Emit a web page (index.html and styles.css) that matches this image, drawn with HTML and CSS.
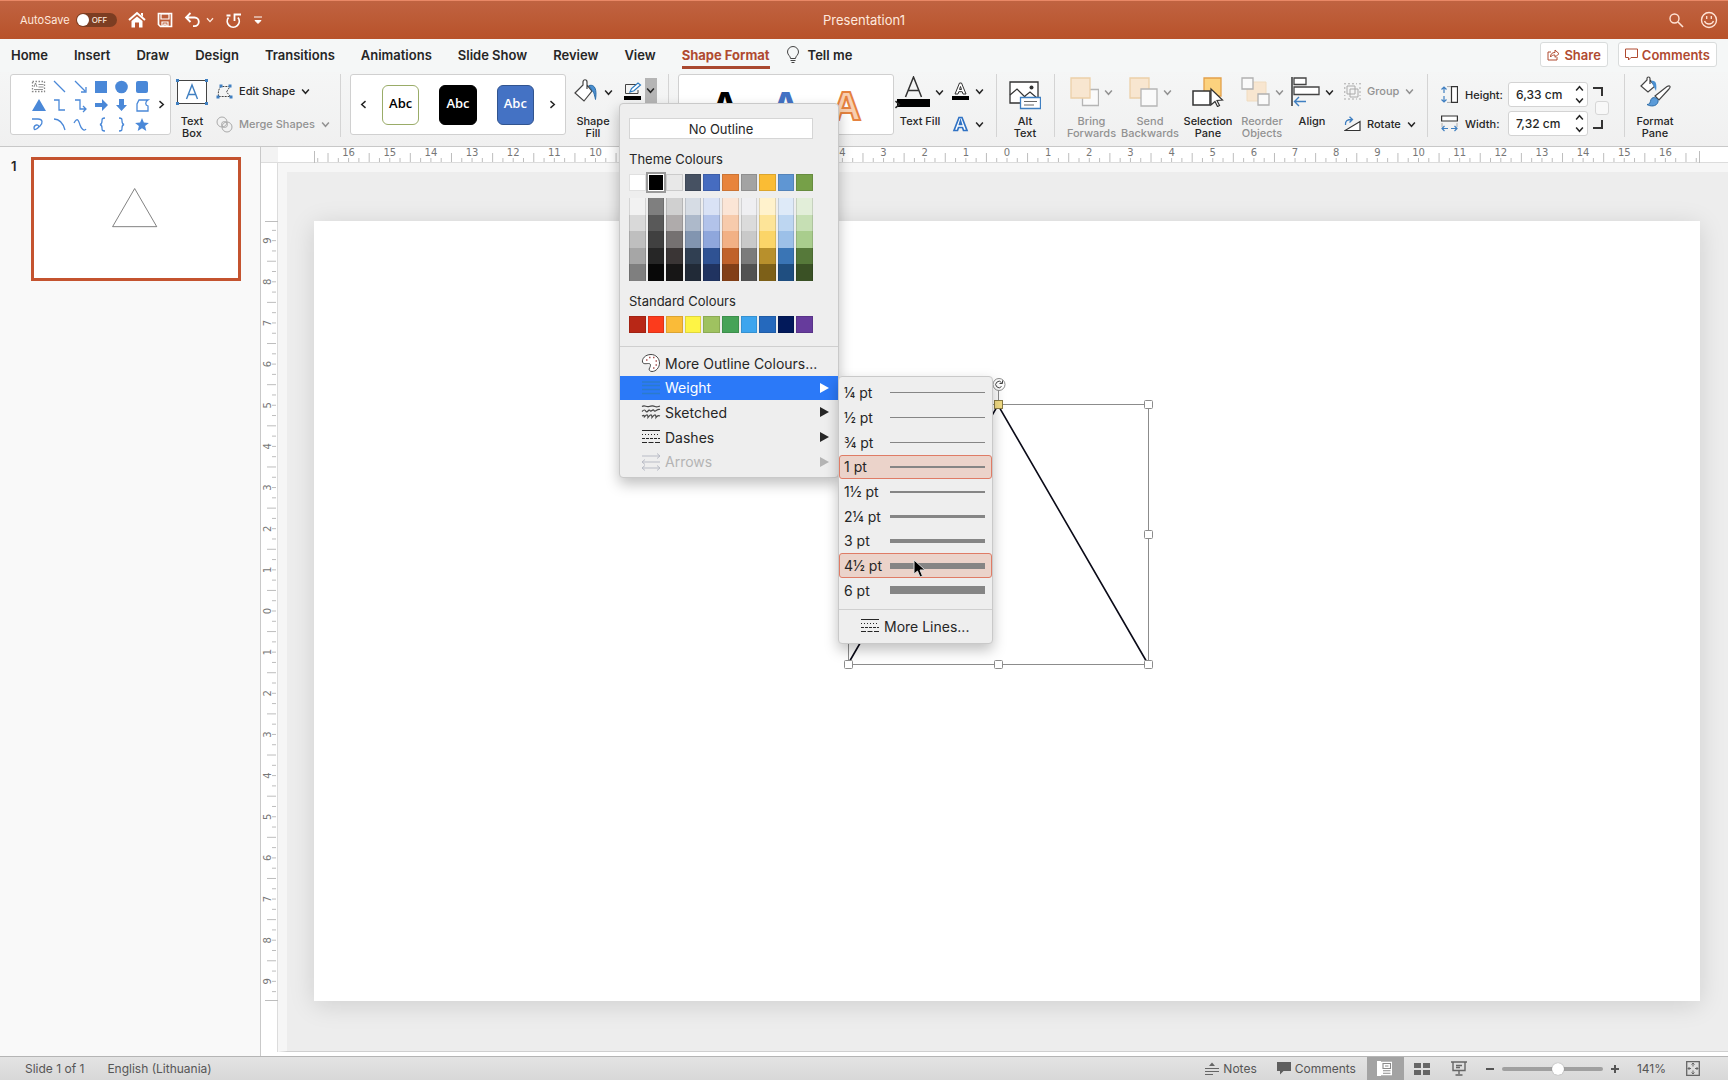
FILE: index.html
```html
<!DOCTYPE html>
<html lang="en">
<head>
  <meta charset="utf-8">
  <title>Presentation1</title>
  <link rel="stylesheet" href="styles.css">
</head>
<body>
  <svg class="defs" width="0" height="0" aria-hidden="true">
    <symbol id="chevron" viewBox="0 0 8 8"><path d="M1 2.200 4 5.600 7 2.200" fill="none" stroke="currentColor" stroke-width="1.300"/></symbol>
    <symbol id="dashes" viewBox="0 0 20 16"><path d="M1 1.500h18" stroke="currentColor"/><path d="M1 5.500h18" stroke="currentColor" stroke-dasharray="1 2"/><path d="M1 9.500h18" stroke="currentColor" stroke-dasharray="3 1"/><path d="M1 13.500h18" stroke="currentColor" stroke-dasharray="5 1.500"/></symbol>
  </svg>

  <header class="titlebar">
    <div class="quick">
      <label class="autosave">AutoSave <input type="checkbox" class="switch"><span class="track">OFF</span></label>
      <button type="button" aria-label="Home"><svg width="18" height="18" viewBox="0 0 18 18"><path d="M1 9 9 2l8 7" fill="none" stroke="#fff" stroke-width="2"/><path d="M13 2h2v4l-2-2zM3.500 10 9 5.500l5.500 4.500v6.500H11v-5H7v5H3.500z" fill="#fff"/></svg></button>
      <button type="button" aria-label="Save"><svg width="16" height="16" viewBox="0 0 16 16"><path d="M1.500 1.500h13v13h-11l-2-2z" fill="none" stroke="#fff" stroke-width="1.700"/><path d="M4 2h8v5H4zM5 10h6v4H9v-2H7v2H5z" fill="none" stroke="#fff" stroke-width="1.200"/></svg></button>
      <button type="button" class="undo" aria-label="Undo"><svg width="18" height="16" viewBox="0 0 18 16"><path d="M6.500 1 2 5.500 6.500 10M2 5.500h8.500a4.300 4.300 0 0 1 0 8.600H9" fill="none" stroke="#fff" stroke-width="1.800"/></svg><svg width="8" height="8"><use href="#chevron"/></svg></button>
      <button type="button" aria-label="Redo"><svg width="17" height="17" viewBox="0 0 17 17"><path d="M3.500 5.500A6 6 0 1 0 13 5.500M9.500 9V2.500H16M1.500 3.500h4" fill="none" stroke="#fff" stroke-width="1.800"/></svg></button>
      <button type="button" aria-label="Customise"><svg width="10" height="10" viewBox="0 0 10 10"><path d="M1 2h8M2 5.500h6L5 8.500z" fill="#fff" stroke="#fff"/></svg></button>
    </div>
    <h1>Presentation1</h1>
    <div class="title-right">
      <button type="button" aria-label="Search"><svg width="16" height="16" viewBox="0 0 16 16"><circle cx="6.500" cy="6.500" r="4.500" fill="none" stroke="#ffe3d5" stroke-width="1.400"/><path d="m10 10 5 5" stroke="#ffe3d5" stroke-width="1.600"/></svg></button>
      <button type="button" aria-label="Feedback"><svg width="18" height="18" viewBox="0 0 18 18"><circle cx="9" cy="9" r="7.500" fill="none" stroke="#ffe3d5" stroke-width="1.400"/><path d="M6.700 5v3M11.300 5v3M4.500 10c1.500 4 7.500 4 9 0" fill="none" stroke="#ffe3d5" stroke-width="1.300"/></svg></button>
    </div>
  </header>

  <nav class="tabs">
    <a href="#">Home</a><a href="#">Insert</a><a href="#">Draw</a><a href="#">Design</a><a href="#">Transitions</a><a href="#">Animations</a><a href="#">Slide Show</a><a href="#">Review</a><a href="#">View</a><a href="#" class="active">Shape Format</a>
    <a href="#" class="tell"><svg width="14" height="18" viewBox="0 0 14 18"><path d="M4.500 12.500c0-2.500-3-3.500-3-6.500a5.500 5.500 0 0 1 11 0c0 3-3 4-3 6.500zM4.500 14.500h5M5.500 16.500h3" fill="none" stroke="#444"/></svg>Tell me</a>
    <div class="tab-buttons">
      <button type="button"><svg width="13" height="13" viewBox="0 0 13 13"><path d="M4 4H1v8h9V9M3.500 9C3.500 6 5 4.500 8 4.500V2l4 3.700-4 3.600V7C6 7 4.500 7.500 3.500 9z" fill="none" stroke="#b04a30"/></svg>Share</button>
      <button type="button"><svg width="13" height="13" viewBox="0 0 13 13"><path d="M.5 1h12v8.500H6L3.500 12V9.500h-3z" fill="none" stroke="#b04a30"/></svg>Comments</button>
    </div>
  </nav>

  <section class="ribbon">
    <div class="group group-shapes">
      <div class="gallery shapes">
        <svg viewBox="0 0 124 56" width="124" height="56" fill="none" stroke="#4a88d8" stroke-width="1.300">
          <path d="M4.500 4.500h12v10h-12z" stroke="#888" stroke-dasharray="1.500 1.500"/><path d="m6 10 1.500-4L9 10M10.500 7.500h5M10.500 10h5M6 12.500h9" stroke="#777" stroke-width=".8"/>
          <path d="m26 4 11 11M47 4l10 10M58 10v5h-5"/>
          <path d="M67 4h12v12H67z" stroke="none" fill="#4a88d8"/><circle cx="93.500" cy="10" r="6.300" stroke="none" fill="#4a88d8"/><rect x="108" y="4" width="12" height="12" rx="2" stroke="none" fill="#4a88d8"/>
          <path d="m11 22 7 12H4zM67 26h7v-4l6 6-6 6v-4h-7zM91 22h5v6h3l-5.500 6-5.500-6h3z" stroke="none" fill="#4a88d8"/>
          <path d="M26 23h5v10h6M47 23h5v9h6M55 29l3 3-3 3M111 23h9c-3 2-3 5 0 6v5h-11v-7zM4 42h6c5 0 5 4 2 7s-6 5-6 2 5-5 5 0M26 42c6 0 9 4 11 11M46 46c4-7 5-1 6 2s4 7 6 4M77 41c-3 0-3 1-3 3s0 3-2 3.500c2 .5 2 1.500 2 3.500s0 3 3 3M91 41c3 0 3 1 3 3s0 3 2 3.500c-2 .5-2 1.500-2 3.500s0 3-3 3"/>
          <path d="m114 41 1.900 4.600 5 .3-3.800 3.200 1.200 4.900-4.300-2.700-4.300 2.700 1.200-4.900-3.800-3.200 5-.3z" stroke="none" fill="#4a88d8"/>
        </svg>
        <button type="button" class="next" aria-label="More shapes"><svg width="9" height="9"><use href="#chevron"/></svg></button>
      </div>
      <button type="button" class="tool w42"><span class="pic"><svg width="32" height="26" viewBox="0 0 32 26"><path d="M1.500 1.500h29v23h-29z" fill="#fff" stroke="#444"/><path d="M0 0h3v3H0zM29 0h3v3h-3zM0 23h3v3H0zM29 23h3v3h-3z" fill="#3f7fc1"/><path d="m10.500 20 5.500-14 5.500 14M12.500 15.500h7" fill="none" stroke="#3f7fc1" stroke-width="1.400"/></svg></span>Text<br>Box</button>
      <div class="col edit-col">
        <button type="button"><svg width="17" height="15" viewBox="0 0 17 15"><path d="M2.500 12.500C2 8 2.500 5 5 2.500h9L10.500 8l4 4.500z" fill="none" stroke="#444" stroke-dasharray="2 1"/><path d="M3.500.5h3v3h-3zM12.500.5h3v3h-3zM.5 11.500h3v3h-3zM13.500 11.500h3v3h-3z" fill="#3f7fc1"/></svg>Edit Shape<svg width="9" height="9"><use href="#chevron"/></svg></button>
        <button type="button" disabled><svg width="17" height="17" viewBox="0 0 17 17" fill="none" stroke="#aaa"><circle cx="6" cy="6" r="5"/><circle cx="11" cy="11" r="5"/><circle cx="8.500" cy="8.500" r="3"/></svg>Merge Shapes<svg width="9" height="9"><use href="#chevron"/></svg></button>
      </div>
    </div>

    <div class="group group-styles">
      <div class="gallery styles">
        <button type="button" class="prev" aria-label="Previous styles"><svg width="9" height="9"><use href="#chevron"/></svg></button>
        <button type="button" class="style-item outline-green">Abc</button>
        <button type="button" class="style-item fill-black">Abc</button>
        <button type="button" class="style-item fill-blue">Abc</button>
        <button type="button" class="next" aria-label="Next styles"><svg width="9" height="9"><use href="#chevron"/></svg></button>
      </div>
      <button type="button" class="tool w54"><span class="pic"><svg width="26" height="28" viewBox="0 0 26 28"><path d="M2 15 10 7V4c0-3 4-3 4 0v7-4l5 6L11 23z" fill="#fff" stroke="#444" stroke-width="1.200"/><path d="M16 7.500c6-1.500 8 4 6.500 14-1-5-2-8-3.500-9z" fill="#4a8fd0" stroke="#2d6da8"/></svg><svg width="9" height="9"><use href="#chevron"/></svg></span>Shape<br>Fill</button>
      <div class="split">
        <button type="button" class="split-main" aria-label="Shape Outline"><svg width="18" height="18" viewBox="0 0 18 18"><path d="M12 2.500H1.500v9H14V8" fill="none" stroke="#444"/><path d="m6 10 1.500-3.500L14 1l2.500 2L10 8.800z" fill="#fff" stroke="#2d7cc1" stroke-width="1.200"/><path d="M0 14h17v4H0z"/></svg></button>
        <button type="button" class="split-arrow" aria-label="Outline options"><svg width="9" height="9"><use href="#chevron"/></svg></button>

        <div class="menu">
          <button type="button" class="no-outline">No Outline</button>
          <h2>Theme Colours</h2>
          <div class="swatches" id="theme"></div>
          <div class="swatches shades" id="shades"></div>
          <h2>Standard Colours</h2>
          <div class="swatches" id="standard"></div>
          <ul class="menu-list">
            <li><button type="button"><svg width="20" height="20" viewBox="0 0 20 20"><path d="M10 1.500C4 1.500.8 6 1.500 9c.7 2.500 4 1.500 6 1.500 3 0 2 3 1 4.500s0 3.500 2.500 3.500c4 0 7.500-4 7.500-8.500s-3.500-8.500-8.500-8.500z" fill="#fff" stroke="#444"/><path d="M5 7h1.500M8 4.500h1.500M12 4.500h1.500M14.500 8H16M14.500 12H16M12 15h1.500" stroke="#a55" stroke-width="1.500"/></svg>More Outline Colours...</button></li>
            <li><button type="button" class="selected"><svg width="20" height="16" viewBox="0 0 20 16"><path d="M1 2h18M1 5.500h18M1 9.500h18M1 13.500h18" stroke="#2b7bcb" stroke-width="1.500"/></svg>Weight<i class="arrow"></i></button>
              <div class="submenu">
                <div class="weights" id="weights"></div>
                <button type="button" class="more-lines"><svg width="20" height="16"><use href="#dashes"/></svg>More Lines...</button>
                <svg class="cursor" width="14" height="20" viewBox="0 0 14 20"><path d="M1 1v14l3.500-3 2.500 6 2.500-1-2.500-6H12z" stroke="#ddd"/></svg>
              </div>
            </li>
            <li><button type="button"><svg width="20" height="16" viewBox="0 0 20 16"><path d="M1 2.500c3-2 4 1 7 0s4-1 6 0 3 0 5-.5M1 7.500c2-2 3-2 4 0s3-3 4-1 3-2 4 0 3-2 6-1M1 12c2-1 3-1 2 1.500 3-4 4-3 4 0 3-4 4-3 4 0 3-4 4-3 4 0 1-1.500 3-2 4-1.500" fill="none" stroke="#444" stroke-width="1.200"/></svg>Sketched<i class="arrow"></i></button></li>
            <li><button type="button"><svg width="20" height="16"><use href="#dashes"/></svg>Dashes<i class="arrow"></i></button></li>
            <li><button type="button" disabled><svg width="20" height="18" viewBox="0 0 20 18"><path d="M1 3h18M16 .5 19 3l-3 2.500M1 9h18M4 6.500 1 9l3 2.500M1 15h18M4 12.500 1 15l3 2.500M16 12.500l3 2.500-3 2.500" fill="none" stroke="#b9bcc6"/></svg>Arrows<i class="arrow"></i></button></li>
          </ul>
        </div>
      </div>
    </div>

    <div class="group group-wordart">
      <div class="gallery wordart">
        <button type="button" class="wa wa-black">A</button>
        <button type="button" class="wa wa-blue">A</button>
        <button type="button" class="wa wa-orange">A</button>
        <button type="button" class="next" aria-label="Next styles"><svg width="9" height="9"><use href="#chevron"/></svg></button>
      </div>
      <button type="button" class="tool w52"><span class="pic tight"><svg width="33" height="32" viewBox="0 0 33 32"><path d="m8.500 21 8-20 8 20M11.500 14.500h10" fill="none" stroke="#333" stroke-width="1.500"/><path d="M0 23h33v8H0z"/></svg><svg width="9" height="9"><use href="#chevron"/></svg></span>Text Fill</button>
      <div class="col effects-col">
        <button type="button" aria-label="Text Outline"><svg width="17" height="18" viewBox="0 0 17 18"><path d="M3 12 7.500 1h2L14 12h-3l-.8-2.300H6.800L6 12zM7.500 7.500h2l-1-3z" fill="#fff" stroke="#333"/><path d="M0 14h17v4H0z"/></svg><svg width="9" height="9"><use href="#chevron"/></svg></button>
        <button type="button" aria-label="Text Effects"><svg width="17" height="16" viewBox="0 0 17 16"><path d="M2 14.500 7 1.500h3l5 13h-3.500l-1-3h-4l-1 3zM7.500 8.500h2l-1-3.500z" fill="#fff" stroke="#2f72c4" stroke-width="1.700"/></svg><svg width="9" height="9"><use href="#chevron"/></svg></button>
      </div>
    </div>

    <div class="group group-alt">
      <button type="button" class="tool w54"><span class="pic low"><svg width="32" height="29" viewBox="0 0 32 29"><path d="M1 1h28v21H1z" fill="#fff" stroke="#333" stroke-width="1.300"/><path d="m1 14 7-6 11 11M16 15l5-4 7 6" fill="none" stroke="#333" stroke-width="1.200"/><circle cx="22.500" cy="6.500" r="2" fill="#333"/><path d="M11.500 16.500h20v11h-20z" fill="#fff" stroke="#3f7fc1" stroke-width="1.300"/><path d="M15 20.500h13M15 24h10" stroke="#666"/></svg></span>Alt<br>Text</button>
    </div>

    <div class="group group-arrange">
      <button type="button" class="tool w57" disabled><span class="pic"><svg width="29" height="30" viewBox="0 0 29 30"><path d="M12.500 12.500h16v16h-16z" fill="#fafafa" stroke="#b5b5b5" stroke-width="1.300"/><path d="M1 1h19v20H1z" fill="#f8e6d0" stroke="#ecd0a8" stroke-width="1.300"/></svg><svg width="9" height="9"><use href="#chevron"/></svg></span>Bring<br>Forwards</button>
      <button type="button" class="tool w60" disabled><span class="pic"><svg width="29" height="30" viewBox="0 0 29 30"><path d="M1 1h19v20H1z" fill="#f8e6d0" stroke="#ecd0a8" stroke-width="1.300"/><path d="M12 12h16v17H12z" fill="#fafafa" stroke="#b5b5b5" stroke-width="1.300"/></svg><svg width="9" height="9"><use href="#chevron"/></svg></span>Send<br>Backwards</button>
      <button type="button" class="tool w56"><span class="pic"><svg width="32" height="30" viewBox="0 0 32 30"><path d="M12 1h17v18H12z" fill="#fcd27e" stroke="#e3a04a" stroke-width="1.300"/><path d="M1 14h17v14H1z" fill="#fff" stroke="#333" stroke-width="1.500"/><path d="M19 12v16l4-3.500 2.500 5 2-1-2.500-5 5.500-.5z" fill="#fff" stroke="#333" stroke-width="1.200"/></svg></span>Selection<br>Pane</button>
      <button type="button" class="tool w52" disabled><span class="pic"><svg width="29" height="30" viewBox="0 0 29 30"><path d="M6 5h19v19H6z" fill="#f8e6d0" stroke="#f0dcc0"/><path d="M1 1h11v11H1zM17 17h11v11H17z" fill="#fafafa" stroke="#b0b0b0" stroke-width="1.300"/></svg><svg width="9" height="9"><use href="#chevron"/></svg></span>Reorder<br>Objects</button>
      <button type="button" class="tool w48"><span class="pic"><svg width="29" height="30" viewBox="0 0 29 30"><path d="M1 0v29" stroke="#333" stroke-width="1.500"/><path d="M3 1h12v6.500H3zM3 10h25v7.500H3z" fill="#fff" stroke="#444" stroke-width="1.300"/><path d="M15 24.500H3.500M8 20l-4.500 4.500L8 29" fill="none" stroke="#3f7fc1" stroke-width="1.400"/></svg><svg width="9" height="9"><use href="#chevron"/></svg></span>Align</button>
      <div class="col arrange-col">
        <button type="button" disabled><svg width="17" height="17" viewBox="0 0 17 17" fill="none" stroke="#aaa"><path d="M3 3h8v8H3zM6 6h8v8H6z"/><path d="M0 .8h2M15 .8h2M0 16h2M15 16h2M4 .8h9M4 16h9M.8 4v9M16 4v9" stroke-dasharray="2 2"/></svg>Group<svg width="9" height="9"><use href="#chevron"/></svg></button>
        <button type="button"><svg width="17" height="16" viewBox="0 0 17 16"><path d="M1 14.500h15v-9z" fill="#fff" stroke="#333" stroke-width="1.200"/><path d="M1.500 9C1 5 3 3.500 8 3.500M5.500.7l3 2.800-3 3" fill="none" stroke="#3f7fc1" stroke-width="1.300"/></svg>Rotate<svg width="9" height="9"><use href="#chevron"/></svg></button>
      </div>
    </div>

    <div class="group group-size">
      <div class="sizes">
        <div class="size"><svg width="17" height="17" viewBox="0 0 17 17"><path d="M3 1v6M3 10v6M.5 3.500 3 1l2.500 2.500M.5 13.500 3 16l2.500-2.500" fill="none" stroke="#3f7fc1" stroke-width="1.200"/><path d="M6.500.6H10M6.500 16.400H10" stroke="#666" stroke-dasharray="1 1"/><path d="M10.500.6h6v15.800h-6z" fill="#fff" stroke="#333" stroke-width="1.200"/></svg><label for="height">Height:</label>
          <span class="spin"><input type="text" id="height" value="6,33 cm"><span class="steps"><button type="button" class="up" aria-label="Increase height"><svg width="9" height="9"><use href="#chevron"/></svg></button><button type="button" aria-label="Decrease height"><svg width="9" height="9"><use href="#chevron"/></svg></button></span></span></div>
        <div class="size"><svg width="17" height="17" viewBox="0 0 17 17"><path d="M1 11.500v-4M16 11.500v-4" stroke="#666" stroke-dasharray="1 1"/><path d="M.6 1h15.800v5H.6z" fill="#fff" stroke="#333" stroke-width="1.200"/><path d="M1 13.500h6M10 13.500h6M3.500 11 1 13.500 3.500 16M13.500 11l2.500 2.500-2.500 2.500" fill="none" stroke="#3f7fc1" stroke-width="1.200"/></svg><label for="width">Width:</label>
          <span class="spin"><input type="text" id="width" value="7,32 cm"><span class="steps"><button type="button" class="up" aria-label="Increase width"><svg width="9" height="9"><use href="#chevron"/></svg></button><button type="button" aria-label="Decrease width"><svg width="9" height="9"><use href="#chevron"/></svg></button></span></span></div>
      </div>
      <div class="lock"><i class="bracket top"></i><input type="checkbox" aria-label="Lock aspect ratio"><i class="bracket bottom"></i></div>
    </div>

    <div class="group group-pane">
      <button type="button" class="tool w60"><span class="pic"><svg width="32" height="32" viewBox="0 0 32 32"><path d="m2 10 6-6V2.500c0-2 3-2 3 0V8 4l5 6-7 6z" fill="#fff" stroke="#444" stroke-width="1.200"/><path d="M12 5c5-1 6 3 5 10l-3-6z" fill="#4a8fd0"/><path d="M16 20 28 10.500c3-1.500 4 0 2 2.500L20 24z" fill="#fff" stroke="#444" stroke-width="1.200"/><path d="M8 28.500c3 0 3-2 4-5 2-4 8-1 7 2.500-1.500 5-8 4.500-11 2.500z" fill="#5b9bd8" stroke="#2d6da8"/></svg></span>Format<br>Pane</button>
    </div>
  </section>

  <main class="editor">
    <aside class="slides">
      <span class="slide-no">1</span>
      <a href="#" class="thumb" aria-label="Slide 1"><svg viewBox="0 -10 1386 800"><path d="M684 184 834 443H534z" fill="none" stroke="#555" stroke-width="5"/></svg></a>
    </aside>
    <div class="workspace">
      <div class="ruler-corner"></div>
      <div class="ruler-top"><svg id="ruler-h" viewBox="0 0 1386 16"></svg></div>
      <div class="ruler-left"><svg id="ruler-v" viewBox="0 0 16 780"></svg></div>
      <div class="stage">
        <div class="slide">
          <svg viewBox="0 0 1386 780">
            <path d="M534 443 684 184 834 443" fill="none" stroke="#0b0b18" stroke-width="1.600"/>
            <path d="M534.500 183.500h300v260h-300zM684.500 184v-15" fill="none" stroke="#8c8c8c"/>
            <g fill="#fff" stroke="#8c8c8c">
              <rect x="530.500" y="179.500" width="8" height="8" rx="1"/><rect x="830.500" y="179.500" width="8" height="8" rx="1"/>
              <rect x="530.500" y="309.500" width="8" height="8" rx="1"/><rect x="830.500" y="309.500" width="8" height="8" rx="1"/>
              <rect x="530.500" y="439.500" width="8" height="8" rx="1"/><rect x="680.500" y="439.500" width="8" height="8" rx="1"/><rect x="830.500" y="439.500" width="8" height="8" rx="1"/>
              <rect x="680.500" y="179.500" width="8" height="8" fill="#f3dd85" stroke="#8a7c45"/>
              <circle cx="685" cy="163.500" r="6"/>
            </g>
            <path d="M687.500 165.500a3.200 3.200 0 1 1 0-4M688.500 159.500v3h-3" fill="none" stroke="#444"/>
          </svg>
        </div>
      </div>
    </div>
  </main>

  <footer class="status">
    <span>Slide 1 of 1</span>
    <span class="language">English (Lithuania)</span>
    <div class="status-right">
      <button type="button" class="notes"><svg width="14" height="14" viewBox="0 0 14 14"><path d="M0 6.500h14M0 9.500h14M0 12.500h8" stroke="#666" stroke-width="1.200"/><path d="M4 4h6L7 .5z" fill="#666"/></svg>Notes</button>
      <button type="button" class="comments"><svg width="14" height="13" viewBox="0 0 14 13"><path d="M0 0h14v9H6.500L3 12.500V9H0z" fill="#5f5f5f"/></svg>Comments</button>
      <button type="button" class="view current" aria-label="Normal view"><svg width="16" height="15" viewBox="0 0 16 15"><path d="M0 0h4v15H0zM4 .7h11v13.600H4" fill="#fff"/><path d="M6 2.500h7.500v5H6zM6 9.800h7.500M6 12.300h7.500M8 5h3.500" fill="none" stroke="#8b8b8b" stroke-width="1.100"/></svg></button>
      <button type="button" class="view" aria-label="Slide sorter"><svg width="16" height="12" viewBox="0 0 16 12"><path d="M0 0h7v5H0zM9 0h7v5H9zM0 7h7v5H0zM9 7h7v5H9z" fill="#666"/></svg></button>
      <button type="button" class="view" aria-label="Slide show"><svg width="16" height="15" viewBox="0 0 16 15"><path d="M0 1h16M2 1v8.500h12V1M5 4.500h6M5 6.500h4M8 9.500V13M4.500 14h7" fill="none" stroke="#666" stroke-width="1.400"/></svg></button>
      <button type="button" class="zoom-out" aria-label="Zoom out"></button>
      <input type="range" min="0" max="100" value="56" aria-label="Zoom">
      <button type="button" class="zoom-in" aria-label="Zoom in"></button>
      <span class="percent">141%</span>
      <button type="button" class="fit" aria-label="Fit slide"><svg width="14" height="15" viewBox="0 0 14 15"><path d="M.7.700h12.600v13.600H.7z" fill="none" stroke="#666" stroke-width="1.300"/><path d="M7 2v3.500M7 9.500V13M2 7.500h3M9 7.500h3M5.500 3.500 7 2l1.500 1.500M5.500 11.500 7 13l1.500-1.500M3.500 6 2 7.500 3.500 9M10.500 6 12 7.500 10.500 9" fill="none" stroke="#666"/></svg></button>
    </div>
  </footer>

  <script src="script.js"></script>
</body>
</html>
```
FILE: styles.css
```css
* {
  box-sizing: border-box;
}

body {
  margin: 0;
  height: 100vh;
  display: flex;
  flex-direction: column;
  overflow: hidden;
  font-family: Inter, "Liberation Sans", sans-serif;
  font-size: 13px;
  color: #262626;
  background: #ededed;
}

button {
  font: inherit;
  color: inherit;
  background: none;
  border: none;
  padding: 0;
}

button:disabled {
  color: #929292;
}

a {
  color: inherit;
  text-decoration: none;
}

svg {
  display: block;
  flex: none;
}

.defs {
  position: absolute;
}

/* title bar */
.titlebar {
  display: grid;
  grid-template-columns: 1fr auto 1fr;
  align-items: center;
  height: 39px;
  flex: none;
  padding: 0 10px;
  border-top: 1px solid #e98866;
  background: linear-gradient(#c06341, #b8522a);
  color: #ffe9de;
}

.titlebar h1 {
  margin: 0;
  font-size: 13px;
  font-weight: 400;
}

.quick {
  display: flex;
  align-items: center;
  gap: 11px;
  padding-left: 10px;
}

.autosave {
  display: flex;
  align-items: center;
  gap: 6px;
  font-size: 11px;
}

.switch {
  appearance: none;
  width: 12px;
  height: 12px;
  margin: 0 -19px 0 1px;
  border-radius: 50%;
  background: #fff;
  z-index: 1;
}

.track {
  width: 41px;
  height: 14px;
  padding-left: 16px;
  border-radius: 7px;
  background: #7c3d22;
  font-size: 8px;
  font-weight: 500;
  line-height: 14px;
}

.undo {
  display: flex;
  align-items: center;
  gap: 4px;
}

.title-right {
  display: flex;
  justify-content: flex-end;
  align-items: center;
  gap: 16px;
}

/* tabs */
.tabs {
  display: flex;
  align-items: center;
  gap: 26px;
  height: 33px;
  flex: none;
  padding: 0 11px 2px;
  background: #f5f7f7;
  font-weight: 600;
  white-space: nowrap;
}

.tabs a {
  line-height: 22px;
  border-bottom: 3px solid transparent;
  border-top: 3px solid transparent;
}

.tabs .active {
  color: #b04a30;
  border-bottom-color: #a9482f;
  font-weight: 700;
}

.tabs .tell {
  display: flex;
  align-items: center;
  gap: 8px;
  margin-left: -10px;
}

.tab-buttons {
  display: flex;
  gap: 10px;
  margin-left: auto;
}

.tab-buttons button {
  display: flex;
  align-items: center;
  gap: 4px;
  height: 25px;
  padding: 0 6px;
  border: 1px solid #d9dcdc;
  border-radius: 3px;
  background: #fff;
  color: #b04a30;
}

/* ribbon */
.ribbon {
  display: flex;
  height: 75px;
  flex: none;
  padding: 2px 0 0 10px;
  border-bottom: 1px solid #c8c8c8;
  background: linear-gradient(#f5f6f6, #f0f0f0);
  font-size: 11px;
  font-weight: 500;
  white-space: nowrap;
}

.group {
  display: flex;
  flex: none;
  height: 63px;
  border-right: 1px solid #d4d4d4;
}

.group-styles,
.group-wordart {
  padding: 0 11px 0 9px;
}

.group-wordart {
  padding-right: 0;
}

.group-alt {
  padding: 0 2px 0 1px;
}

.group-arrange {
  padding-left: 8px;
}

.group-pane {
  border: none;
}

.gallery {
  display: flex;
  align-items: center;
  justify-content: space-between;
  height: 61px;
  padding: 0 4px;
  border: 1px solid #d0d0d0;
  border-radius: 3px;
  background: #fff;
}

.gallery.shapes {
  width: 161px;
  padding-left: 17px;
}

.gallery.styles {
  justify-content: center;
  width: 216px;
}

.gallery.wordart {
  gap: 33px;
  width: 216px;
  padding-left: 32px;
  justify-content: flex-start;
}

.wordart .next {
  margin-left: auto;
}

.next svg {
  transform: rotate(-90deg);
}

.prev svg {
  transform: rotate(90deg);
}

.styles .next,
.styles .prev {
  margin: 0 4px;
}

.style-item {
  width: 40px;
  height: 40px;
  margin: 0 10px;
  padding-bottom: 3px;
  border: 1px solid #000;
  border-radius: 6px;
  background: #000;
  color: #fff;
  font: 600 13px "Open Sans", sans-serif;
}

.outline-green {
  border-color: #9aac68;
  background: #fff;
  color: #000;
}

.fill-blue {
  border-color: #31548f;
  background: #4472c4;
}

.wa {
  font: 700 40px "Noto Sans", sans-serif;
}

.wa-black {
  color: #000;
}

.wa-blue {
  color: #4472c4;
}

.wa-orange {
  color: #f8cfb0;
  -webkit-text-stroke: 2px #e5823f;
}

.tool {
  line-height: 12px;
  display: block;
  align-self: flex-start;
  text-align: center;
}

.pic {
  display: flex;
  justify-content: center;
  align-items: center;
  gap: 5px;
  height: 36px;
  margin-bottom: 5px;
}

.pic.low {
  padding-top: 6px;
}

.w42 { width: 42px; }
.w48 { width: 48px; }
.w52 { width: 52px; }
.w54 { width: 54px; }
.w56 { width: 56px; }
.w57 { width: 57px; }
.w60 { width: 60px; }

.col {
  display: flex;
  flex-direction: column;
  justify-content: space-between;
  padding: 7px 0 3px 3px;
}

.col button {
  display: flex;
  align-items: center;
  gap: 6px;
  height: 20px;
}

.edit-col {
  width: 127px;
}

.effects-col {
  width: 50px;
  padding-left: 6px;
}

.arrange-col {
  width: 91px;
  padding-left: 8px;
}

.split {
  position: relative;
  display: flex;
  height: 25px;
  margin-top: 4px;
}

.split-main {
  width: 25px;
  padding-left: 4px;
}

.split-arrow {
  width: 12px;
  padding-left: 1px;
  background: #b5b5b5;
}

.sizes {
  display: flex;
  flex-direction: column;
  gap: 4px;
  padding: 8px 0 0 13px;
}

.size {
  display: flex;
  align-items: center;
  gap: 7px;
}

.size label {
  width: 36px;
}

.spin {
  display: flex;
  width: 80px;
  height: 25px;
  border: 1px solid #d3d3d3;
  border-radius: 3px;
  background: #fff;
}

.spin input {
  width: 58px;
  padding: 0 0 0 7px;
  border: none;
  background: none;
  color: inherit;
  font: inherit;
  font-size: 12px;
}

.steps {
  display: flex;
  flex-direction: column;
  justify-content: center;
  gap: 3px;
  padding-left: 8px;
}

.steps .up svg {
  transform: rotate(180deg);
}

.lock {
  display: flex;
  flex-direction: column;
  align-items: center;
  gap: 5px;
  width: 36px;
  padding: 13px 16px 0 0;
}

.lock input {
  appearance: none;
  width: 14px;
  height: 14px;
  margin: 0 0 0 8px;
  border: 1px solid #d6d6d6;
  border-radius: 3px;
  background: #f8f8f8;
}

.bracket {
  width: 10px;
  height: 9px;
  border-right: 2px solid #333;
}

.bracket.top {
  border-top: 2px solid #333;
}

.bracket.bottom {
  border-bottom: 2px solid #333;
}

/* outline menu, hangs below the split button */
.menu,
.submenu {
  position: absolute;
  z-index: 5;
  border: 1px solid #c9c9c9;
  border-radius: 4px;
  background: #eeeeee;
  box-shadow: 0 6px 14px rgba(0, 0, 0, 0.25);
  font-size: 14px;
  font-weight: 400;
}

.menu {
  top: 25px;
  left: -1px;
  width: 220px;
  padding: 14px 0 3px;
}

.menu h2 {
  margin: 12px 9px 6px;
  font-size: 13px;
  line-height: 17px;
  font-weight: 400;
}

.no-outline {
  display: block;
  width: 184px;
  height: 21px;
  margin-left: 9px;
  border: 1px solid #d5d5d5;
  background: #fff;
  font-size: 13px;
}

.swatches {
  display: grid;
  grid-template-columns: repeat(10, 1fr);
  gap: 2px;
  width: 184px;
  height: 17px;
  margin-left: 9px;
}

.swatches button {
  border: 1px solid rgba(0, 0, 0, 0.12);
}

.swatches .picked {
  border: 1px solid #fff;
  outline: 2px solid #9a9a9a;
}

.shades {
  height: 83px;
  margin-top: 7px;
}

.shade {
  display: flex;
  flex-direction: column;
}

.shade button {
  flex: 1;
  border-width: 0 1px;
}

.menu-list {
  display: grid;
  grid-template-rows: repeat(5, 1fr);
  height: 128px;
  list-style: none;
  margin: 13px 0 0;
  padding: 4px 0 0;
  border-top: 1px solid #cfcfcf;
}

.menu-list li {
  position: relative;
}

.menu-list li > button {
  display: flex;
  align-items: center;
  gap: 4px;
  width: 100%;
  padding: 0 9px 0 21px;
}

.menu-list li > button:not(.more-lines) {
  height: 100%;
}

.menu-list li > button:disabled {
  color: #b4b4b4;
}

.menu-list .selected {
  background: #2b79f8;
  color: #fff;
}

.arrow {
  margin-left: auto;
  border: 5px solid transparent;
  border-left: 9px solid currentColor;
  border-right: none;
}

.submenu {
  top: 0;
  left: 218px;
  width: 155px;
  padding-top: 4px;
}

.weights {
  display: grid;
  grid-template-rows: repeat(9, 1fr);
  height: 222px;
}

.weights button {
  display: flex;
  align-items: center;
  justify-content: space-between;
  padding: 0 6px 0 4px;
  border: 1px solid transparent;
  border-radius: 3px;
}

.weights .hot {
  border-color: #df7c66;
  background: #ebd3ca;
}

.weights i {
  width: 95px;
  background: #858585;
}

.more-lines {
  display: flex;
  align-items: center;
  gap: 4px;
  width: 100%;
  height: 34px;
  margin-top: 6px;
  padding: 0 0 0 21px;
  border-top: 1px solid #cfcfcf;
}

.cursor {
  position: absolute;
  left: 74px;
  top: 182px;
}

/* editor */
.editor {
  display: flex;
  flex: 1;
  min-height: 0;
}

.slides {
  display: flex;
  align-items: flex-start;
  gap: 11px;
  width: 261px;
  flex: none;
  padding: 10px 19px 0 11px;
  border-right: 1px solid #c9c9c9;
  background: #f9f9f9;
}

.slide-no {
  width: 9px;
  line-height: 18px;
  font-weight: 600;
}

.thumb {
  flex: 1;
  border: 3px solid #c4532f;
  background: #fff;
}

.workspace {
  display: grid;
  grid-template-columns: 17px 1fr;
  grid-template-rows: 16px 1fr;
  flex: 1;
  min-width: 0;
  border-bottom: 4px solid #fff;
}

.ruler-corner {
  background: #f3f3f3;
  border-bottom: 1px solid #ddd;
}

.ruler-top {
  padding: 0 28px 0 36px;
  border-bottom: 1px solid #dcdcdc;
  background: #fff;
}

.ruler-left {
  padding-top: 58px;
  border-right: 1px solid #dcdcdc;
  background: #fff;
}

.ruler-top svg,
.ruler-left svg {
  width: 100%;
  overflow: visible;
}

.ruler-top text,
.ruler-left text {
  fill: #777;
  font: 10px "DejaVu Sans", sans-serif;
  text-anchor: middle;
}

.ruler-top path,
.ruler-left path {
  stroke: #bdbdbd;
}

.stage {
  padding: 49px 28px 0 27px;
  border: solid #f6f6f6;
  border-width: 9px 0 0 9px;
  border-bottom: 1px solid #cfcfcf;
  overflow: hidden;
  background: #ededed;
}

.slide {
  background: #fff;
  box-shadow: 0 4px 24px rgba(0, 0, 0, 0.13);
}

/* status bar */
.status {
  display: flex;
  align-items: center;
  gap: 23px;
  height: 24px;
  flex: none;
  padding: 0 28px 0 25px;
  border-top: 1px solid #b5b5b5;
  background: linear-gradient(#e3e3e3, #d8d8d8);
  color: #565656;
  font-size: 12px;
}

.status-right {
  display: flex;
  align-items: center;
  height: 100%;
  margin-left: auto;
}

.status-right button {
  display: flex;
  align-items: center;
  gap: 4px;
}

.status-right .notes {
  margin-right: 20px;
}

.status-right .comments {
  margin-right: 11px;
}

.status-right .view {
  justify-content: center;
  width: 37px;
  height: 100%;
}

.view.current {
  background: #a3a3a3;
}

.zoom-out,
.zoom-in {
  width: 8px;
  height: 8px;
  margin: 0 8px;
  background: linear-gradient(#555, #555) center / 8px 2px no-repeat;
}

.zoom-in {
  background: linear-gradient(#555, #555) center / 8px 2px no-repeat, linear-gradient(#555, #555) center / 2px 8px no-repeat;
}

.status input {
  appearance: none;
  width: 101px;
  height: 4px;
  margin: 0;
  border-radius: 2px;
  background: #a0a0a0;
}

.status input::-webkit-slider-thumb {
  appearance: none;
  width: 12px;
  height: 12px;
  border-radius: 50%;
  background: #fff;
  box-shadow: 0 0 1px #777;
}

.percent {
  margin: 0 20px 0 10px;
}
```
FILE: script.js
```javascript
"use strict";

var theme = ["#ffffff", "#000000", "#e8e8e8", "#465162", "#466cc0", "#e8843c", "#a3a3a3", "#fabc34", "#5f96d3", "#76a048"];

var shades = [
  ["#f2f2f2", "#d9d9d9", "#bfbfbf", "#a6a6a6", "#7f7f7f"],
  ["#7f7f7f", "#595959", "#404040", "#262626", "#080808"],
  ["#d0d0d0", "#afabab", "#757171", "#3a3535", "#171616"],
  ["#d6dce4", "#adb9ca", "#8295b0", "#303f52", "#212a37"],
  ["#d9e2f5", "#b2c3ea", "#8fa7dc", "#2f5293", "#203360"],
  ["#fbe5d6", "#f7cbac", "#f2b185", "#c0622a", "#823f17"],
  ["#efeff2", "#dbdbdb", "#c9c9c9", "#7b7b7b", "#525252"],
  ["#fff2cc", "#fde498", "#fbd568", "#b8902c", "#7d6018"],
  ["#deeaf8", "#bdd6f1", "#9cc0e8", "#3a75b5", "#1f4e80"],
  ["#e2eed9", "#c6dfb4", "#a9cd8d", "#56793a", "#3a5125"]
];

var standard = ["#b82716", "#fc3b1c", "#fabb38", "#fef445", "#9fc260", "#46a357", "#3da5ee", "#2569bd", "#02195a", "#663b9c"];

var weights = [
  ["¼ pt", 1], ["½ pt", 1], ["¾ pt", 1], ["1 pt", 2], ["1½ pt", 2],
  ["2¼ pt", 3], ["3 pt", 4], ["4½ pt", 6], ["6 pt", 8]
];

function addColour(parent, colour) {
  var button = document.createElement("button");
  button.type = "button";
  button.setAttribute("aria-label", colour);
  button.style.background = colour;
  parent.appendChild(button);
  return button;
}

function fillColours() {
  for (var i = 0; i < 10; i++) {
    var main = addColour(document.getElementById("theme"), theme[i]);
    if (i === 1) {
      main.className = "picked";
    }
    var column = document.createElement("div");
    column.className = "shade";
    for (var j = 0; j < 5; j++) {
      addColour(column, shades[i][j]);
    }
    document.getElementById("shades").appendChild(column);
    addColour(document.getElementById("standard"), standard[i]);
  }
}

function fillWeights() {
  for (var i = 0; i < weights.length; i++) {
    var button = document.createElement("button");
    button.type = "button";
    button.textContent = weights[i][0];
    if (i === 3 || i === 7) {
      button.className = "hot";
    }
    var line = document.createElement("i");
    line.style.height = weights[i][1] + "px";
    button.appendChild(line);
    document.getElementById("weights").appendChild(button);
  }
}

// centimetre marks, counted from the middle of the slide
function drawRuler(id, length, vertical) {
  var cm = 41.15;
  var middle = length / 2;
  var path = "";
  var labels = "";
  var quarters = Math.floor(middle / cm * 4);

  for (var q = -quarters; q <= quarters; q++) {
    var pos = middle + q * cm / 4;
    var size = q % 4 !== 0 && q % 2 === 0 ? 9 : 4;
    path += vertical ? "M" + (15 - size) + " " + pos + "h" + size : "M" + pos + " " + (15 - size) + "v" + size;
    if (q % 4 === 0) {
      var number = Math.abs(q / 4);
      labels += vertical
        ? '<text transform="translate(10 ' + pos + ') rotate(-90)">' + number + "</text>"
        : '<text x="' + pos + '" y="9">' + number + "</text>";
    }
  }
  path += vertical ? "M4 .5h14M4 " + (length - 0.5) + "h14" : "M.5 4v14M" + (length - 0.5) + " 4v14";
  document.getElementById(id).innerHTML = '<path d="' + path + '"/>' + labels;
}

fillColours();
fillWeights();
drawRuler("ruler-h", 1386, false);
drawRuler("ruler-v", 780, true);
```
